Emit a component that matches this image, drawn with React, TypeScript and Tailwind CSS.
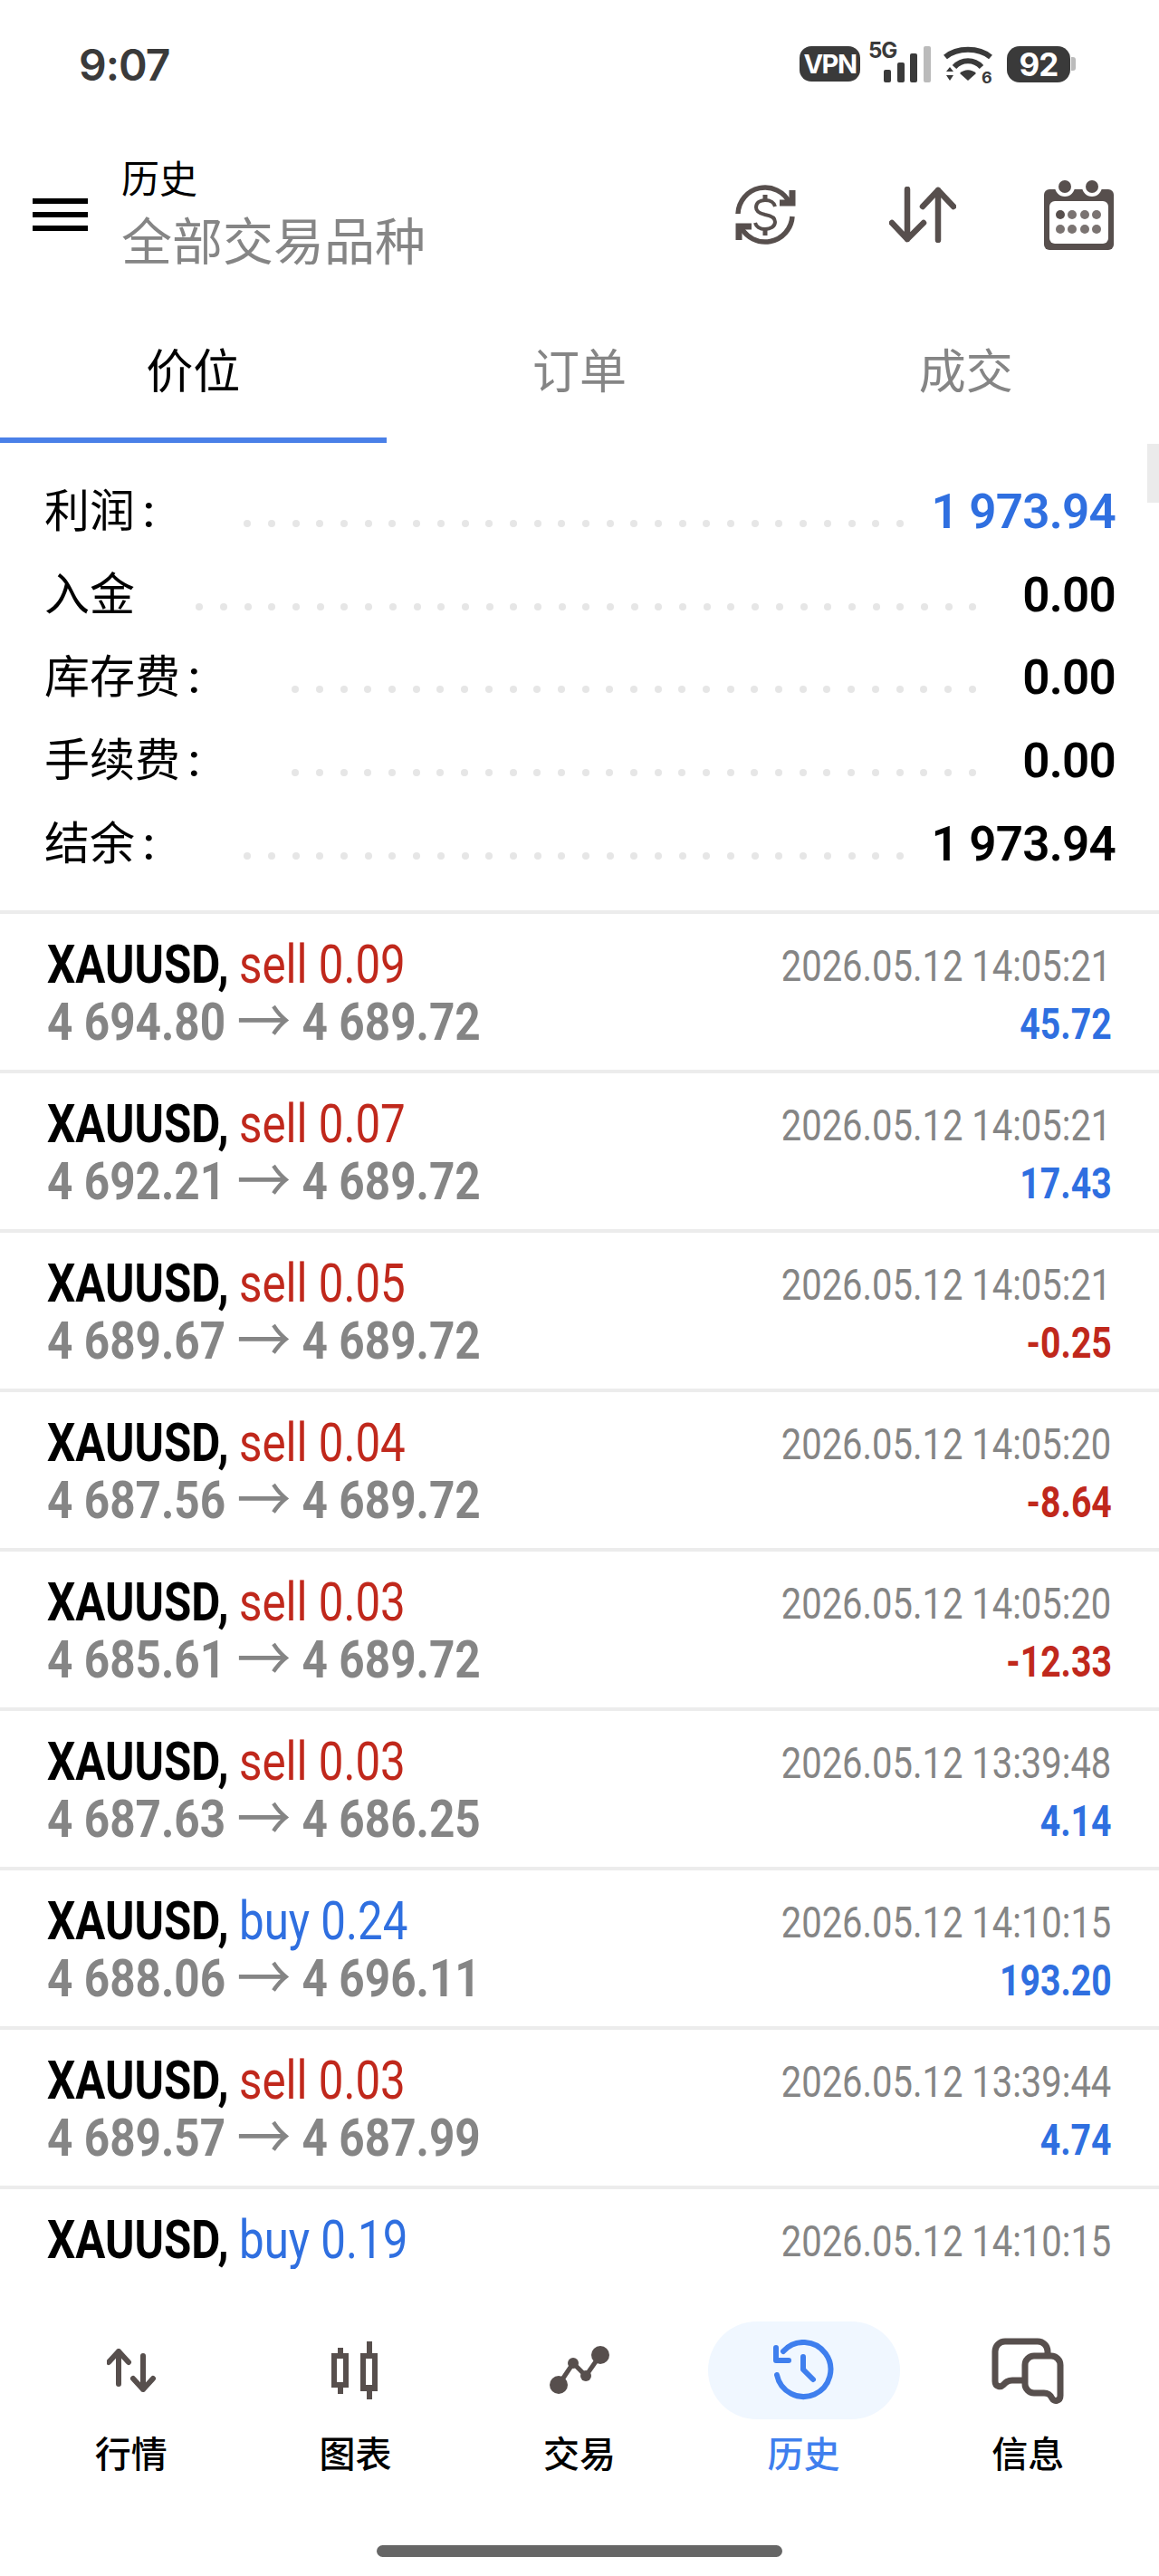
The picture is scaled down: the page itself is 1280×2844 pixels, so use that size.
const summary = [
  { label: "利润", colon: true, value: "1 973.94", gap: "ml-[89px]", dots: 28, blue: true },
  { label: "入金", colon: false, value: "0.00", gap: "ml-[58px]", dots: 33 },
  { label: "库存费", colon: true, value: "0.00", gap: "ml-[92px]", dots: 29 },
  { label: "手续费", colon: true, value: "0.00", gap: "ml-[92px]", dots: 29 },
  { label: "结余", colon: true, value: "1 973.94", gap: "ml-[89px]", dots: 28 },
];

const deals = [
  { side: "sell 0.09", from: "4 694.80", to: "4 689.72", time: "2026.05.12 14:05:21", profit: "45.72" },
  { side: "sell 0.07", from: "4 692.21", to: "4 689.72", time: "2026.05.12 14:05:21", profit: "17.43" },
  { side: "sell 0.05", from: "4 689.67", to: "4 689.72", time: "2026.05.12 14:05:21", profit: "-0.25" },
  { side: "sell 0.04", from: "4 687.56", to: "4 689.72", time: "2026.05.12 14:05:20", profit: "-8.64" },
  { side: "sell 0.03", from: "4 685.61", to: "4 689.72", time: "2026.05.12 14:05:20", profit: "-12.33" },
  { side: "sell 0.03", from: "4 687.63", to: "4 686.25", time: "2026.05.12 13:39:48", profit: "4.14" },
  { side: "buy 0.24", from: "4 688.06", to: "4 696.11", time: "2026.05.12 14:10:15", profit: "193.20" },
  { side: "sell 0.03", from: "4 689.57", to: "4 687.99", time: "2026.05.12 13:39:44", profit: "4.74" },
  { side: "buy 0.19", from: "", to: "", time: "2026.05.12 14:10:15", profit: "" },
];

function Wifi() {
  return (
    <svg width="54" height="41" viewBox="0 0 54 41" fill="none">
      <path d="M2 12 C15 1 39 1 52 12" stroke="#3a3a3a" strokeWidth="6" />
      <path d="M12 23 C20 14 34 14 42 23" stroke="#3a3a3a" strokeWidth="6" />
      <path d="M18 30 C23 25 31 25 36 30 L27 38 Z" fill="#3a3a3a" />
      <path d="M3 28 L7 23 L11 28 Z M3 32 L11 32 L7 38 Z" fill="#3a3a3a" />
      <text x="42" y="41" fontSize="18" fontWeight="700" fill="#3a3a3a" fontFamily="Inter, sans-serif">6</text>
    </svg>
  );
}

function StatusBar() {
  return (
    <div className="h-[180px] shrink-0 pt-[47px] pl-[87px] pr-[92px] flex justify-between text-[#3a3a3a]">
      <div className="text-[48px] leading-[50px] font-semibold tracking-[-1px] [font-family:Inter,sans-serif]">9:07</div>
      <div className="flex items-start pt-[4px]">
        <div className="w-[67px] h-[39px] rounded-[13px] bg-[#3a3a3a] text-white text-[29px] leading-[39px] font-bold text-center [font-family:Inter,sans-serif] tracking-[-1.5px]">VPN</div>
        <div className="relative w-[68px] h-[40px] ml-[9px]">
          <div className="absolute left-0 top-[-7px] text-[24px] leading-[24px] font-bold [font-family:Inter,sans-serif] tracking-[-1px]">5G</div>
          <div className="absolute left-[17px] bottom-0 flex items-end gap-[6.5px]">
            <div className="w-[8px] h-[14px] rounded-[2px] bg-[#3a3a3a]" />
            <div className="w-[8px] h-[22px] rounded-[2px] bg-[#3a3a3a]" />
            <div className="w-[8px] h-[32px] rounded-[2px] bg-[#3a3a3a]" />
            <div className="w-[8px] h-[40px] rounded-[2px] bg-[#bbbbbb]" />
          </div>
        </div>
        <div className="ml-[15px]">
          <Wifi />
        </div>
        <div className="ml-[16px] w-[70px] h-[40px] rounded-[14px] bg-[#3a3a3a] text-white text-[35px] leading-[40px] font-bold text-center [font-family:Inter,sans-serif] tracking-[-1px]">92</div>
        <div className="ml-[1px] mt-[12px] w-[5px] h-[15px] rounded-r-[3px] bg-[#bbbbbb]" />
      </div>
    </div>
  );
}

function DollarIcon() {
  return (
    <svg width="67" height="67" viewBox="0 0 67 67" fill="none" stroke="#574f4d">
      <path d="M3 32 A30 30 0 0 1 60 20" strokeWidth="5.5" />
      <path d="M63 35 A30 30 0 0 1 6 46" strokeWidth="5.5" />
      <path d="M63 6 V20 H49" strokeWidth="7" />
      <path d="M4 61 V46 H18" strokeWidth="7" />
      <path d="M44 24 c-1 -4 -5 -7 -11 -7 c-6 0 -10 3 -10 8 c0 5 5 7 10 8 c6 1 11 3 11 8 c0 5 -5 8 -11 8 c-6 0 -10 -3 -11 -7" strokeWidth="4" />
      <path d="M33 11 V17 M33 49 V56" strokeWidth="5" />
    </svg>
  );
}

function SortIcon() {
  return (
    <svg width="74" height="62" viewBox="0 0 74 62" fill="none" stroke="#574f4d" strokeWidth="6.5" strokeLinecap="round" strokeLinejoin="round">
      <path d="M20 3 V58 M3 40 L20 58 L38 40" />
      <path d="M54 59 V4 M37 22 L54 4 L71 22" />
    </svg>
  );
}

function CalendarIcon() {
  return (
    <svg width="77" height="77" viewBox="0 0 77 77">
      <rect x="0" y="10" width="77" height="67" rx="6" fill="#574f4d" />
      <rect x="6" y="23" width="65" height="47" rx="6" fill="#fff" />
      <circle cx="23" cy="7" r="11" fill="#fff" />
      <circle cx="53" cy="7" r="11" fill="#fff" />
      <circle cx="23" cy="7" r="7" fill="#574f4d" />
      <circle cx="53" cy="7" r="7" fill="#574f4d" />
      <circle cx="18" cy="38" r="5" fill="#574f4d" />
      <circle cx="31" cy="38" r="5" fill="#7a7371" />
      <circle cx="45" cy="38" r="5" fill="#7a7371" />
      <circle cx="58" cy="38" r="5" fill="#7a7371" />
      <circle cx="18" cy="54" r="5" fill="#7a7371" />
      <circle cx="31" cy="54" r="5" fill="#7a7371" />
      <circle cx="45" cy="54" r="5" fill="#7a7371" />
      <circle cx="58" cy="54" r="5" fill="#7a7371" />
    </svg>
  );
}

function Header() {
  return (
    <div className="h-[114px] shrink-0 flex items-center pl-[36px]">
      <div className="w-[61px] flex flex-col gap-[9px]">
        <div className="h-[6px] bg-black" />
        <div className="h-[6px] bg-black" />
        <div className="h-[6px] bg-black" />
      </div>
      <div className="ml-[37px] flex flex-col">
        <div className="text-[42px] leading-[48px] text-black">历史</div>
        <div className="mt-[14px] text-[56px] leading-[62px] text-[#858585]">全部交易品种</div>
      </div>
      <div className="ml-auto flex items-center pr-[50px]">
        <DollarIcon />
        <div className="ml-[103px]">
          <SortIcon />
        </div>
        <div className="ml-[97px]">
          <CalendarIcon />
        </div>
      </div>
    </div>
  );
}

function Tabs() {
  return (
    <div className="h-[195px] shrink-0 grid grid-cols-3 text-[52px]">
      <div className="border-b-[6px] border-[#4a80e8] text-black flex items-center justify-center pt-[47px]">价位</div>
      <div className="text-[#858585] flex items-center justify-center pt-[41px]">订单</div>
      <div className="text-[#858585] flex items-center justify-center pt-[41px]">成交</div>
    </div>
  );
}

function Summary() {
  return (
    <div className="relative shrink-0 h-[520px] pt-[30px] border-b-[4px] border-[#ececec]">
      <div className="absolute right-0 top-[1px] w-[13px] h-[65px] bg-[#ebebeb]" />
      {summary.map((row) => (
        <div key={row.label} className="h-[91.7px] pl-[49px] pr-[48px] flex items-center">
          <div className="flex text-[50px] leading-[60px] text-black">
            {row.label}
            {row.colon && <span className="w-[22px] text-right font-medium">:</span>}
          </div>
          <div className={`flex items-center mt-[26px] ${row.gap}`}>
            {Array.from({ length: row.dots }).map((_, i) => (
              <div key={i} className="w-[26.7px] flex justify-center">
                <div className="w-[8px] h-[8px] rounded-full bg-[#e6e6e6]" />
              </div>
            ))}
          </div>
          <div className={`ml-auto text-[53px] leading-[60px] font-semibold tracking-[-0.8px] ${row.blue ? "text-[#2f6fe0]" : "text-black"}`}>
            {row.value}
          </div>
        </div>
      ))}
    </div>
  );
}

function DealRow({ deal }: { deal: (typeof deals)[number] }) {
  const isBuy = deal.side.startsWith("buy");
  const isLoss = deal.profit.startsWith("-");
  return (
    <div className="h-[176px] shrink-0 border-b-[4px] border-[#ececec] pt-[24px] px-[52px]">
      <div className="flex justify-between h-[63px] leading-[63px]">
        <div className="inline-block origin-left scale-x-[.835] whitespace-nowrap text-[59px]">
          <span className="font-bold text-black">XAUUSD,</span>{" "}
          <span className={`-ml-[1px] ${isBuy ? "text-[#2f6fe0]" : "text-[#c0281c]"}`}>{deal.side}</span>
        </div>
        <div className="mt-[2px] inline-block origin-right scale-x-[.815] whitespace-nowrap text-[49px] text-[#858585] mr-[1px]">{deal.time}</div>
      </div>
      <div className="flex justify-between h-[63px] leading-[63px]">
        <div className="mt-[1px] inline-block origin-left scale-x-[.854] whitespace-nowrap text-[58px] font-bold text-[#858585]">
          {deal.from}{" "}
          {deal.from && <span className="inline-block translate-y-[5px] text-[70px] leading-[50px] font-normal">→</span>}{" "}
          {deal.to}
        </div>
        <div className={`mt-[3px] inline-block origin-right scale-x-[.8] whitespace-nowrap text-[49px] font-bold ${isLoss ? "text-[#c0281c]" : "text-[#2f6fe0]"}`}>
          {deal.profit}
        </div>
      </div>
    </div>
  );
}

function QuotesIcon() {
  return (
    <svg width="54" height="48" viewBox="0 0 54 48" fill="none" stroke="#574f4d" strokeWidth="6" strokeLinecap="round" strokeLinejoin="round">
      <path d="M13 39 V3 M2 15 L13 3 L24 15" />
      <path d="M40 8 V45 M29 33 L40 45 L51 33" />
    </svg>
  );
}

function CandlesIcon() {
  return (
    <svg width="52" height="64" viewBox="0 0 52 64">
      <rect x="7" y="7" width="6" height="51" fill="#574f4d" />
      <rect x="0" y="13" width="19" height="38" fill="#574f4d" />
      <rect x="6" y="19" width="7" height="26" fill="#fff" />
      <rect x="39" y="0" width="6" height="64" fill="#574f4d" />
      <rect x="32" y="13" width="19" height="42" fill="#574f4d" />
      <rect x="38" y="19" width="7" height="29" fill="#fff" />
    </svg>
  );
}

function TradeIcon() {
  return (
    <svg width="66" height="54" viewBox="0 0 66 54" fill="#574f4d" stroke="#574f4d">
      <path d="M10 43 L26 19 L40 33 L56 10" fill="none" strokeWidth="5" />
      <circle cx="10" cy="43" r="10" stroke="none" />
      <circle cx="26" cy="19" r="6" stroke="none" />
      <circle cx="40" cy="33" r="6" stroke="none" />
      <circle cx="56" cy="10" r="10" stroke="none" />
    </svg>
  );
}

function HistoryIcon() {
  return (
    <svg width="68" height="68" viewBox="0 0 68 68" fill="none" stroke="#3f7fee" strokeWidth="6" strokeLinecap="round" strokeLinejoin="round">
      <path d="M4 39 A30 30 0 1 0 11 13" />
      <path d="M3 9 V23 H17" />
      <path d="M33 19 V33 L44 44" />
    </svg>
  );
}

function MessagesIcon() {
  return (
    <svg width="80" height="76" viewBox="0 0 80 76" fill="none" stroke="#574f4d" strokeWidth="7" strokeLinejoin="round">
      <path d="M62 22 V17 a11 11 0 0 0 -11 -11 H15 a11 11 0 0 0 -11 11 V50 c0 6 6 7 9 4 c3 -3 5 -5 10 -5 H37" />
      <path d="M47 22 H66 a10 10 0 0 1 10 10 V66 c0 6 -7 7 -9 3 c-2 -4 -4 -6 -9 -6 H47 a10 10 0 0 1 -10 -10 V32 a10 10 0 0 1 10 -10 z" />
    </svg>
  );
}

const navItems = [
  { label: "行情", icon: <QuotesIcon /> },
  { label: "图表", icon: <CandlesIcon /> },
  { label: "交易", icon: <TradeIcon /> },
  { label: "历史", icon: <HistoryIcon />, active: true },
  { label: "信息", icon: <MessagesIcon /> },
];

function BottomNav() {
  return (
    <div className="h-[339px] shrink-0 bg-white pt-[58px]">
      <div className="grid grid-cols-5 px-[21px]">
        {navItems.map((item) => (
          <div key={item.label} className="flex flex-col items-center">
            <div className={`w-[212px] h-[108px] rounded-[54px] flex items-center justify-center ${item.active ? "bg-[#f0f7ff]" : ""}`}>
              {item.icon}
            </div>
            <div className={`mt-[18px] text-[40px] leading-[44px] font-medium ${item.active ? "text-[#3f7fee]" : "text-black"}`}>
              {item.label}
            </div>
          </div>
        ))}
      </div>
      <div className="mt-[77px] mx-auto w-[448px] h-[13px] rounded-full bg-[#666666]" />
    </div>
  );
}

export default function App() {
  return (
    <div className="w-[1280px] h-[2844px] bg-white flex flex-col overflow-hidden [font-family:Roboto,'Noto_Sans_CJK_SC',sans-serif]">
      <StatusBar />
      <Header />
      <Tabs />
      <Summary />
      <div className="flex-1 overflow-hidden">
        {deals.map((deal, i) => (
          <DealRow key={i} deal={deal} />
        ))}
      </div>
      <BottomNav />
    </div>
  );
}
